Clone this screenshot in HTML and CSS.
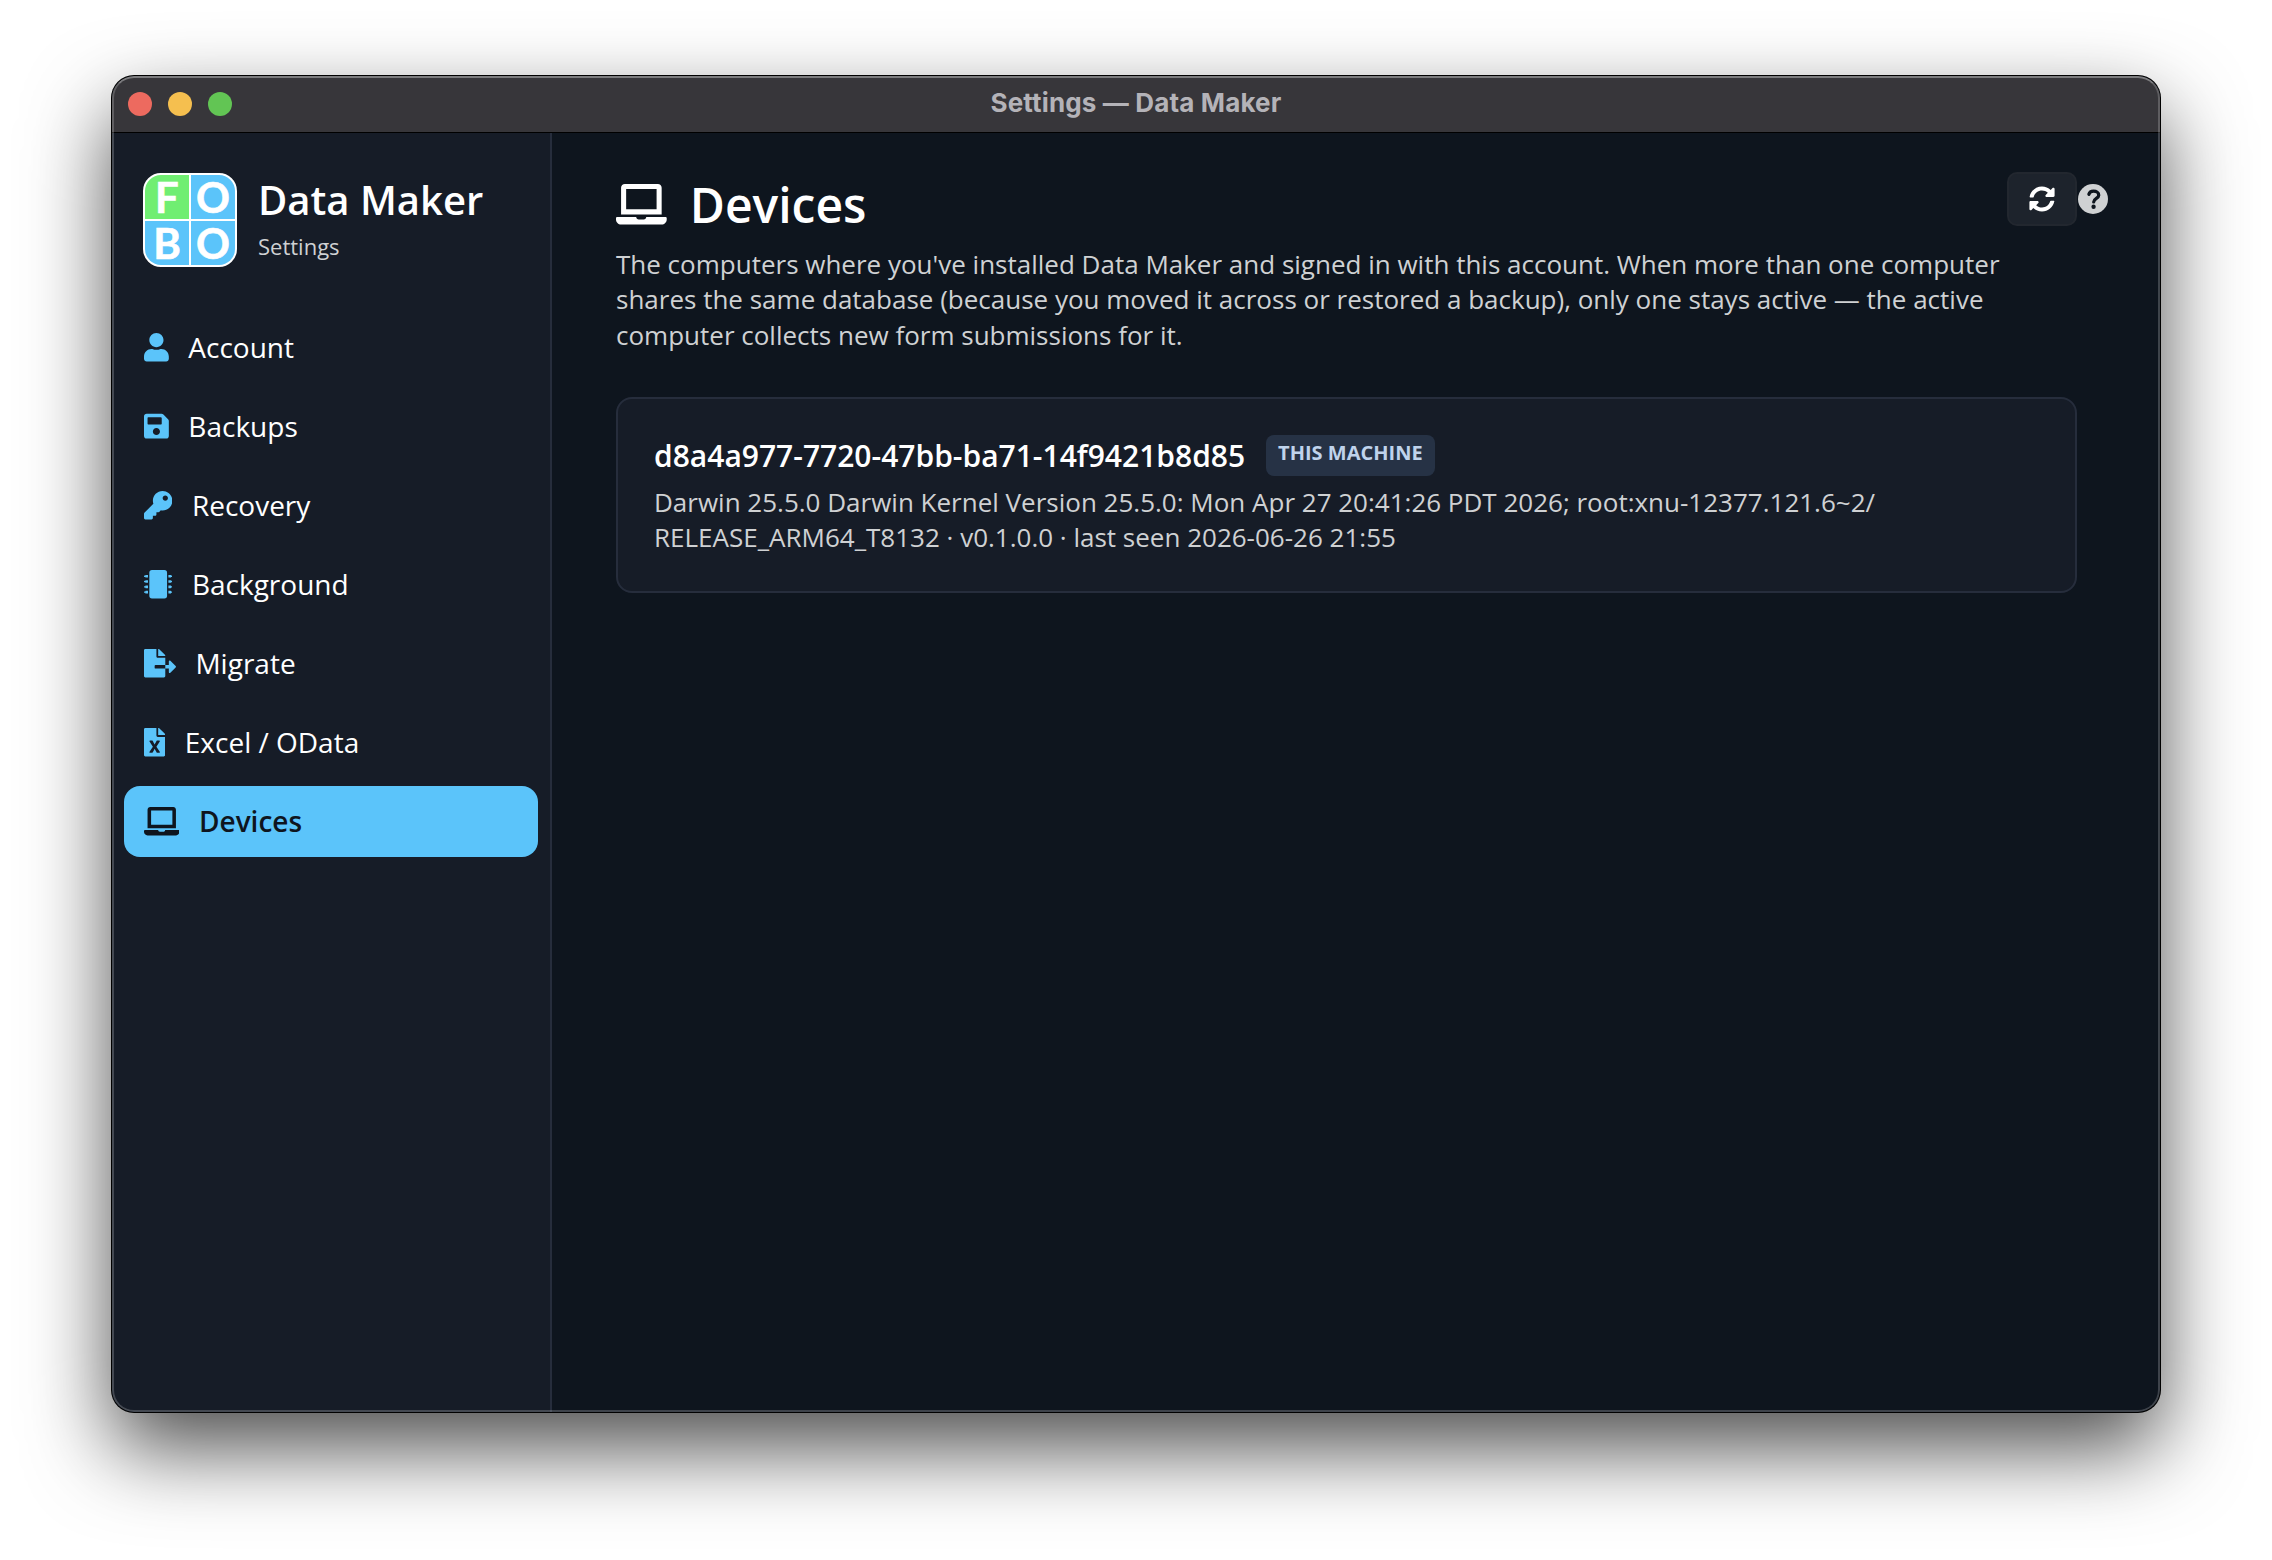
FILE: index.html
```html
<!DOCTYPE html>
<html lang="en">
  <head>
    <meta charset="UTF-8" />
    <meta name="viewport" content="width=device-width, initial-scale=1.0" />
    <title>Settings — Data Maker</title>
    <link rel="stylesheet" href="styles.css">
  </head>
  <body>
    <div class="window">
      <header class="titlebar">
        <div class="lights">
          <span class="light red"></span>
          <span class="light yellow"></span>
          <span class="light green"></span>
        </div>
        <h1>Settings — Data Maker</h1>
      </header>
      <div class="layout">
        <aside class="sidebar">
          <div class="brand">
            <div class="logo">
              <span class="tile tile_green">F</span>
              <span class="tile">O</span>
              <span class="tile">B</span>
              <span class="tile">O</span>
            </div>
            <div class="brand_text">
              <strong>Data Maker</strong>
              <small>Settings</small>
            </div>
          </div>
          <nav class="menu">
            <a class="menu_item">
              <svg class="icon" viewBox="0 0 448 512"><path d="M224 256c70.7 0 128-57.3 128-128S294.7 0 224 0 96 57.3 96 128s57.3 128 128 128zm89.6 32h-16.7c-22.2 10.2-46.9 16-72.9 16s-50.6-5.8-72.9-16h-16.7C60.2 288 0 348.2 0 422.4V464c0 26.5 21.5 48 48 48h352c26.5 0 48-21.5 48-48v-41.6c0-74.2-60.2-134.4-134.4-134.4z"/></svg>
              <span>Account</span>
            </a>
            <a class="menu_item">
              <svg class="icon" viewBox="0 0 448 512"><path d="M433.941 129.941l-83.882-83.882A48 48 0 0 0 316.118 32H48C21.49 32 0 53.49 0 80v352c0 26.51 21.49 48 48 48h352c26.51 0 48-21.49 48-48V163.882a48 48 0 0 0-14.059-33.941zM224 416c-35.346 0-64-28.654-64-64 0-35.346 28.654-64 64-64s64 28.654 64 64c0 35.346-28.654 64-64 64zm96-304.52V212c0 6.627-5.373 12-12 12H76c-6.627 0-12-5.373-12-12V108c0-6.627 5.373-12 12-12h228.52c3.183 0 6.235 1.264 8.485 3.515l3.48 3.48A11.996 11.996 0 0 1 320 111.48z"/></svg>
              <span>Backups</span>
            </a>
            <a class="menu_item">
              <svg class="icon" viewBox="0 0 512 512"><path d="M512 176.001C512 273.203 433.202 352 336 352c-11.22 0-22.19-1.062-32.827-3.069l-24.012 27.014A23.999 23.999 0 0 1 261.223 384H224v40c0 13.255-10.745 24-24 24h-40v40c0 13.255-10.745 24-24 24H24c-13.255 0-24-10.745-24-24v-78.059c0-6.365 2.529-12.47 7.029-16.971l161.802-161.802C163.108 213.814 160 195.271 160 176 160 78.798 238.797.001 335.999 0 433.488-.001 512 78.511 512 176.001zM336 128c0 26.51 21.49 48 48 48s48-21.49 48-48-21.49-48-48-48-48 21.49-48 48z"/></svg>
              <span>Recovery</span>
            </a>
            <a class="menu_item">
              <svg class="icon" viewBox="0 0 512 512">
                <defs>
                  <path id="pin" d="M30 88h42v48H30a6 6 0 0 1-6-6v-6H6a6 6 0 0 1-6-6v-12a6 6 0 0 1 6-6h18v-6a6 6 0 0 1 6-6z"/>
                  <g id="pins">
                    <use href="#pin"/>
                    <use href="#pin" y="96"/>
                    <use href="#pin" y="192"/>
                    <use href="#pin" y="288"/>
                  </g>
                </defs>
                <rect x="96" width="320" height="512" rx="48"/>
                <use href="#pins"/>
                <use href="#pins" transform="translate(512 0) scale(-1 1)"/>
              </svg>
              <span>Background</span>
            </a>
            <a class="menu_item">
              <svg class="icon" viewBox="0 0 576 512"><path d="M384 121.9c0-6.3-2.5-12.4-7-16.9L279.1 7c-4.5-4.5-10.6-7-17-7H256v128h128zM571 308l-95.7-96.4c-10.1-10.1-27.4-3-27.4 11.3V288h-64v64h64v65.2c0 14.3 17.3 21.4 27.4 11.3L571 332c6.6-6.6 6.6-17.4 0-24zm-379 28v-32c0-8.8 7.2-16 16-16h176V160H248c-13.2 0-24-10.8-24-24V0H24C10.7 0 0 10.7 0 24v464c0 13.3 10.7 24 24 24h336c13.3 0 24-10.7 24-24V352H208c-8.8 0-16-7.2-16-16z"/></svg>
              <span>Migrate</span>
            </a>
            <a class="menu_item">
              <svg class="icon" viewBox="0 0 384 512"><path d="M224 136V0H24C10.7 0 0 10.7 0 24v464c0 13.3 10.7 24 24 24h336c13.3 0 24-10.7 24-24V160H248c-13.2 0-24-10.8-24-24zm60.1 106.5L224 336l60.1 93.5c5.1 8-.6 18.5-10.1 18.5h-34.9c-4.4 0-8.5-2.4-10.6-6.3C208.9 405.5 192 373 192 373c-6.4 14.8-10 20-36.6 68.8-2.1 3.9-6.1 6.3-10.5 6.3H110c-9.5 0-15.2-10.5-10.1-18.5l60.3-93.5-60.3-93.5c-5.2-8 .6-18.5 10.1-18.5h34.8c4.4 0 8.5 2.4 10.6 6.3 26.1 48.8 20 33.6 36.6 68.5 0 0 6.1-11.7 36.6-68.5 2.1-3.9 6.2-6.3 10.6-6.3H274c9.5-.1 15.2 10.4 10.1 18.4zM384 121.9v6.1H256V0h6.1c6.4 0 12.5 2.5 17 7l97.9 98c4.5 4.5 7 10.6 7 16.9z"/></svg>
              <span>Excel / OData</span>
            </a>
            <a class="menu_item active">
              <svg class="icon" viewBox="0 0 640 512"><path d="M624 416H381.54c-.74 19.81-14.71 32-32.74 32H288c-18.69 0-33.02-17.47-32.77-32H16c-8.8 0-16 7.2-16 16v16c0 35.2 28.8 64 64 64h512c35.2 0 64-28.8 64-64v-16c0-8.8-7.2-16-16-16zM576 48c0-26.4-21.6-48-48-48H112C85.6 0 64 21.6 64 48v336h512V48zm-64 272H128V64h384v256z"/></svg>
              <span>Devices</span>
            </a>
          </nav>
        </aside>
        <main class="content">
          <div class="page_head">
            <div class="page_intro">
              <h2>
                <svg class="icon" viewBox="0 0 640 512"><path d="M624 416H381.54c-.74 19.81-14.71 32-32.74 32H288c-18.69 0-33.02-17.47-32.77-32H16c-8.8 0-16 7.2-16 16v16c0 35.2 28.8 64 64 64h512c35.2 0 64-28.8 64-64v-16c0-8.8-7.2-16-16-16zM576 48c0-26.4-21.6-48-48-48H112C85.6 0 64 21.6 64 48v336h512V48zm-64 272H128V64h384v256z"/></svg>
                <span>Devices</span>
              </h2>
              <p>
                The computers where you've installed Data Maker and signed in with this account. When more than one computer<br>
                shares the same database (because you moved it across or restored a backup), only one stays active — the active<br>
                computer collects new form submissions for it.
              </p>
            </div>
            <div class="actions">
              <button type="button" class="refresh" aria-label="Refresh">
                <svg class="icon" viewBox="0 0 512 512"><path d="M370.72 133.28C339.458 104.008 298.888 87.962 255.848 88c-77.458.068-144.328 53.178-162.791 126.85-1.344 5.363-6.122 9.15-11.651 9.15H24.103c-7.498 0-13.194-6.807-11.807-14.176C33.933 94.924 134.813 8 256 8c66.448 0 126.791 26.136 171.315 68.685L463.03 40.97C478.149 25.851 504 36.559 504 57.941V192c0 13.255-10.745 24-24 24H345.941c-21.382 0-32.09-25.851-16.971-40.971l41.75-41.749zM32 296h134.059c21.382 0 32.09 25.851 16.971 40.971l-41.75 41.75c31.262 29.273 71.835 45.319 114.876 45.28 77.418-.07 144.315-53.144 162.787-126.849 1.344-5.363 6.122-9.15 11.651-9.15h57.304c7.498 0 13.194 6.807 11.807 14.176C478.067 417.076 377.187 504 256 504c-66.448 0-126.791-26.136-171.315-68.685L48.97 471.03C33.851 486.149 8 475.441 8 454.059V320c0-13.255 10.745-24 24-24z"/></svg>
              </button>
              <svg class="help" viewBox="0 0 512 512">
                <circle cx="256" cy="256" r="256"/>
                <path class="help_hook" d="M186 176C196 140 224 123 264 123C316 123 354 150 354 190C354 246 270 244 268 306"/>
                <circle class="help_dot" cx="266" cy="388" r="37"/>
              </svg>
            </div>
          </div>
          <section class="card">
            <div class="device_name">
              <h3>d8a4a977-7720-47bb-ba71-14f9421b8d85</h3>
              <span class="badge">THIS MACHINE</span>
            </div>
            <p>
              Darwin 25.5.0 Darwin Kernel Version 25.5.0: Mon Apr 27 20:41:26 PDT 2026; root:xnu-12377.121.6~2/<br>
              RELEASE_ARM64_T8132 · v0.1.0.0 · last seen 2026-06-26 21:55
            </p>
          </section>
        </main>
      </div>
    </div>
  </body>
</html>
```

FILE: styles.css
```css
* {
  box-sizing: border-box;
}
body {
  margin: 0;
  width: 2272px;
  height: 1560px;
  padding: 76px 112px 0;
  overflow: hidden;
  background-color: white;
  font-family: "Open Sans", "Noto Sans", sans-serif;
  color: white;
}
h1,
h2,
h3,
p {
  margin: 0;
}
.window {
  position: relative;
  width: 2048px;
  height: 1336px;
  display: flex;
  flex-direction: column;
  overflow: hidden;
  border-radius: 22px;
  background-color: #0e151e;
  box-shadow: 0 0 0 1px black, 0 36px 84px rgba(0, 0, 0, 0.7);
}
/* light edge over the whole window */
.window::after {
  content: "";
  position: absolute;
  inset: 0;
  border: 2px solid rgba(255, 255, 255, 0.2);
  border-top-color: rgba(255, 255, 255, 0.35);
  border-radius: 22px;
  pointer-events: none;
}
.titlebar {
  height: 57px;
  flex: none;
  display: grid;
  grid-template-columns: 1fr auto 1fr;
  align-items: center;
  background-color: #37363a;
  border-bottom: 1px solid black;
}
.titlebar h1 {
  font-family: Inter, sans-serif;
  font-size: 26px;
  font-weight: 700;
  letter-spacing: 0.15px;
  line-height: 32px;
  padding-bottom: 2px;
  color: #b4b3b8;
}
.lights {
  display: flex;
  gap: 16px;
  padding-left: 16px;
}
.light {
  width: 24px;
  height: 24px;
  border-radius: 50%;
}
.red {
  background-color: #ed6a5f;
}
.yellow {
  background-color: #f5bf4f;
}
.green {
  background-color: #62c554;
}
.layout {
  flex: 1;
  display: flex;
}
.sidebar {
  width: 440px;
  padding: 40px 12px 0;
  background-color: #161c27;
  border-right: 2px solid #262d3c;
}
.brand {
  display: flex;
  gap: 21px;
  padding-left: 19px;
  height: 134px;
}
.logo {
  width: 94px;
  height: 94px;
  display: grid;
  grid-template-columns: 1fr 1fr;
  gap: 2px;
  border: 2px solid white;
  border-radius: 18px;
  background-color: white;
}
.tile {
  display: flex;
  justify-content: center;
  align-items: center;
  height: 44px;
  background-color: #5bc4fa;
  font-family: Lato, sans-serif;
  font-size: 42px;
  font-weight: 700;
  line-height: 44px;
  -webkit-text-stroke: 0.6px white;
}
.tile:nth-child(1) {
  border-top-left-radius: 16px;
}
.tile:nth-child(2) {
  border-top-right-radius: 16px;
}
.tile:nth-child(3) {
  border-bottom-left-radius: 16px;
}
.tile:nth-child(4) {
  border-bottom-right-radius: 16px;
}
.tile_green {
  background-color: #70ee72;
}
.brand_text {
  display: flex;
  flex-direction: column;
}
.brand_text strong {
  font-size: 40px;
  font-weight: 600;
  line-height: 54px;
}
.brand_text small {
  font-size: 22px;
  line-height: 30px;
  margin-top: 4px;
  color: #cfd1d3;
}
.menu {
  display: flex;
  flex-direction: column;
  gap: 8px;
  padding-top: 5px;
}
.menu_item {
  display: flex;
  align-items: center;
  gap: 19.5px;
  height: 71px;
  padding-left: 20px;
  border-radius: 16px;
  font-size: 28px;
  line-height: 38px;
}
.menu_item span {
  padding-bottom: 1px;
}
.menu_item .icon {
  height: 28.4px;
  fill: #5bc4fa;
}
.menu_item.active {
  background-color: #5bc4fa;
  color: #0e151e;
  font-weight: 600;
}
.menu_item.active .icon {
  fill: #0e151e;
}
.content {
  flex: 1;
  padding: 39px 0 0 64px;
}
.page_head {
  display: flex;
}
.page_intro {
  width: 1391px;
}
.page_intro h2 {
  display: flex;
  align-items: center;
  gap: 23px;
  font-size: 48px;
  font-weight: 600;
  line-height: 65px;
}
.page_intro h2 .icon {
  height: 40.6px;
  fill: white;
}
.page_intro p,
.card p {
  font-size: 26px;
  line-height: 35.3px;
  color: #cfd1d3;
  white-space: nowrap;
}
.page_intro p {
  margin-top: 10px;
}
.actions {
  display: flex;
  align-items: center;
  gap: 1px;
  height: 54px;
}
.refresh {
  display: flex;
  justify-content: center;
  align-items: center;
  width: 70px;
  height: 54px;
  padding: 0;
  border: 2px solid #22272f;
  border-radius: 10px;
  background-color: #1d232c;
}
.refresh .icon {
  height: 26px;
  fill: white;
}
.help {
  height: 30px;
  fill: #cfd1d3;
}
.help_hook {
  fill: none;
  stroke: #0e151e;
  stroke-width: 56;
  stroke-linecap: round;
}
.help_dot {
  fill: #0e151e;
}
.card {
  width: 1461px;
  height: 196px;
  margin-top: 44px;
  padding: 36px;
  border: 2px solid #262d3c;
  border-radius: 16px;
  background-color: #161c27;
}
.device_name {
  display: flex;
  gap: 21px;
  height: 50px;
}
.device_name h3 {
  font-size: 30px;
  font-weight: 600;
  line-height: 41px;
}
.badge {
  height: 41px;
  padding: 0 12px;
  border-radius: 8px;
  background-color: #263245;
  color: #bfd3ec;
  font-size: 20px;
  font-weight: 700;
  line-height: 35px;
}
```
